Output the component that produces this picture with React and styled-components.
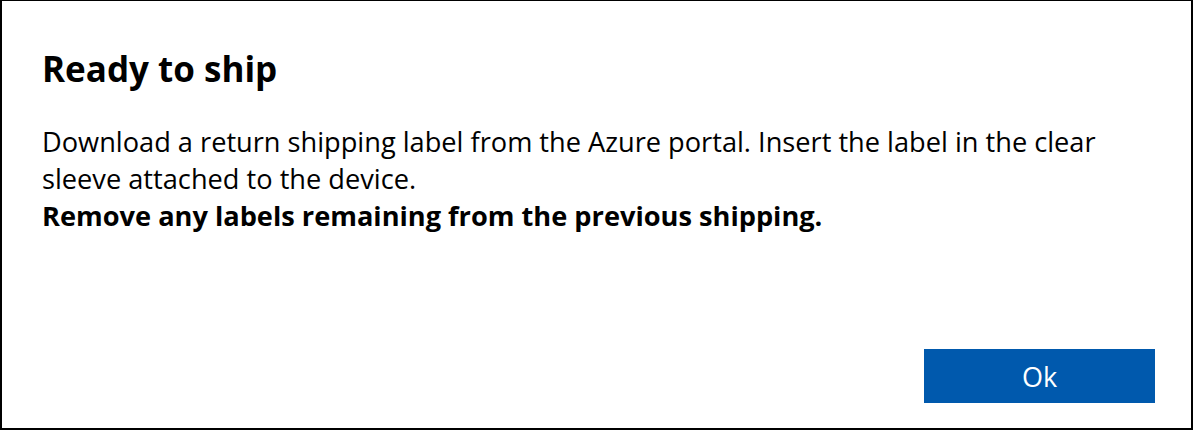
import React from "react";
import styled, { createGlobalStyle } from "styled-components";

const Global = createGlobalStyle`
  html, body { margin: 0; padding: 0; background: #fff; }
  * { box-sizing: border-box; }
`;

const Dialog = styled.div`
  width: 1193px;
  height: 430px;
  border-style: solid;
  border-color: #000;
  border-width: 1px 2px 2px 2px;
  background: #fff;
  display: flex;
  flex-direction: column;
  padding: 44px 36px 25px 40px;
  font-family: "Open Sans", "Noto Sans", sans-serif;
  color: #000;
`;

const Title = styled.h1`
  margin: 0;
  font-size: 35px;
  font-weight: 700;
  line-height: 48px;
`;

const Body = styled.div`
  margin-top: 30px;
  font-size: 27.2px;
  line-height: 37px;
  max-width: 1100px;
`;

const Para = styled.p`
  margin: 0;
  font-weight: ${(p) => (p.$bold ? 700 : 400)};
`;

const Footer = styled.div`
  margin-top: auto;
  display: flex;
  justify-content: flex-end;
`;

const Button = styled.button`
  width: 231px;
  height: 54px;
  border: none;
  background: #0059ad;
  color: #fff;
  font-family: inherit;
  font-size: 27px;
  cursor: pointer;
`;

export default function App() {
  return (
    <>
      <Global />
      <Dialog>
        <Title>Ready to ship</Title>
        <Body>
          <Para>
            Download a return shipping label from the Azure portal. Insert the label in the clear sleeve attached to the device.
          </Para>
          <Para $bold>Remove any labels remaining from the previous shipping.</Para>
        </Body>
        <Footer>
          <Button>Ok</Button>
        </Footer>
      </Dialog>
    </>
  );
}
